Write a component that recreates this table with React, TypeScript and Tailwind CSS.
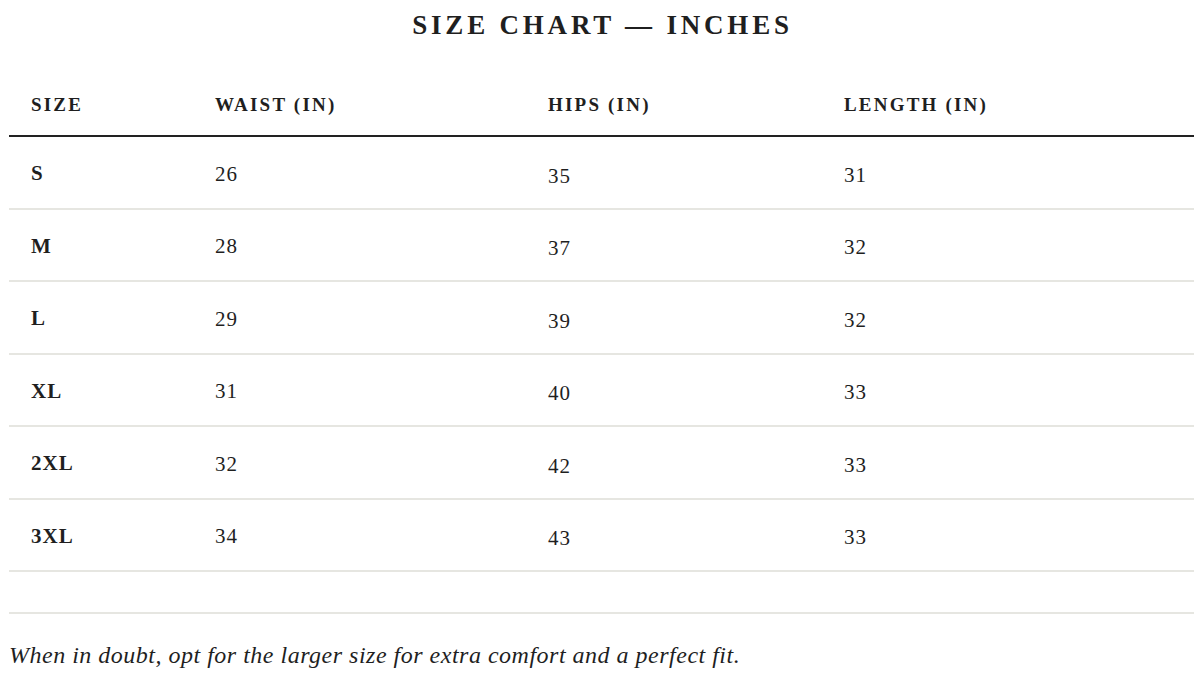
const rows = [
  { size: "S", waist: "26", hips: "35", length: "31" },
  { size: "M", waist: "28", hips: "37", length: "32" },
  { size: "L", waist: "29", hips: "39", length: "32" },
  { size: "XL", waist: "31", hips: "40", length: "33" },
  { size: "2XL", waist: "32", hips: "42", length: "33" },
  { size: "3XL", waist: "34", hips: "43", length: "33" },
]

const cols = "grid grid-cols-[183px_334px_296px_1fr]"

export default function App() {
  return (
    <div className="w-[1200px] h-[685px] bg-white text-[#1f1f1f] font-['Liberation_Serif',Georgia,serif] pl-[9px] pr-[6px] overflow-hidden">
      <h1 className="text-center text-[27px] font-bold tracking-[3.8px] leading-none pt-[12px] pl-[2px]">
        SIZE CHART — INCHES
      </h1>

      <div className="mt-[33px]">
        {/* Header */}
        <div className={`${cols} h-[65px] items-center border-b-2 border-[#222] text-[19px] font-bold tracking-[2.2px]`}>
          <div className="pl-[22px] pt-[3px]">SIZE</div>
          <div className="pl-[23px] pt-[3px]">WAIST (IN)</div>
          <div className="pl-[22px] pt-[3px]">HIPS (IN)</div>
          <div className="pl-[22px] pt-[3px]">LENGTH (IN)</div>
        </div>

        {rows.map((r) => (
          <div key={r.size} className={`${cols} h-[72.5px] items-center border-b-2 border-[#e6e6e1] text-[21px] tracking-[1px]`}>
            <div className="pl-[22px] pt-[3px] font-bold">{r.size}</div>
            <div className="pl-[23px] pt-[4px]">{r.waist}</div>
            <div className="pl-[22px] pt-[8px]">{r.hips}</div>
            <div className="pl-[22px] pt-[6px]">{r.length}</div>
          </div>
        ))}

        <div className="h-[42px] border-b-2 border-[#e6e6e1]" />
      </div>

      <p className="mt-[29px] italic text-[24px] tracking-[0.5px] leading-none">
        When in doubt, opt for the larger size for extra comfort and a perfect fit.
      </p>
    </div>
  )
}
